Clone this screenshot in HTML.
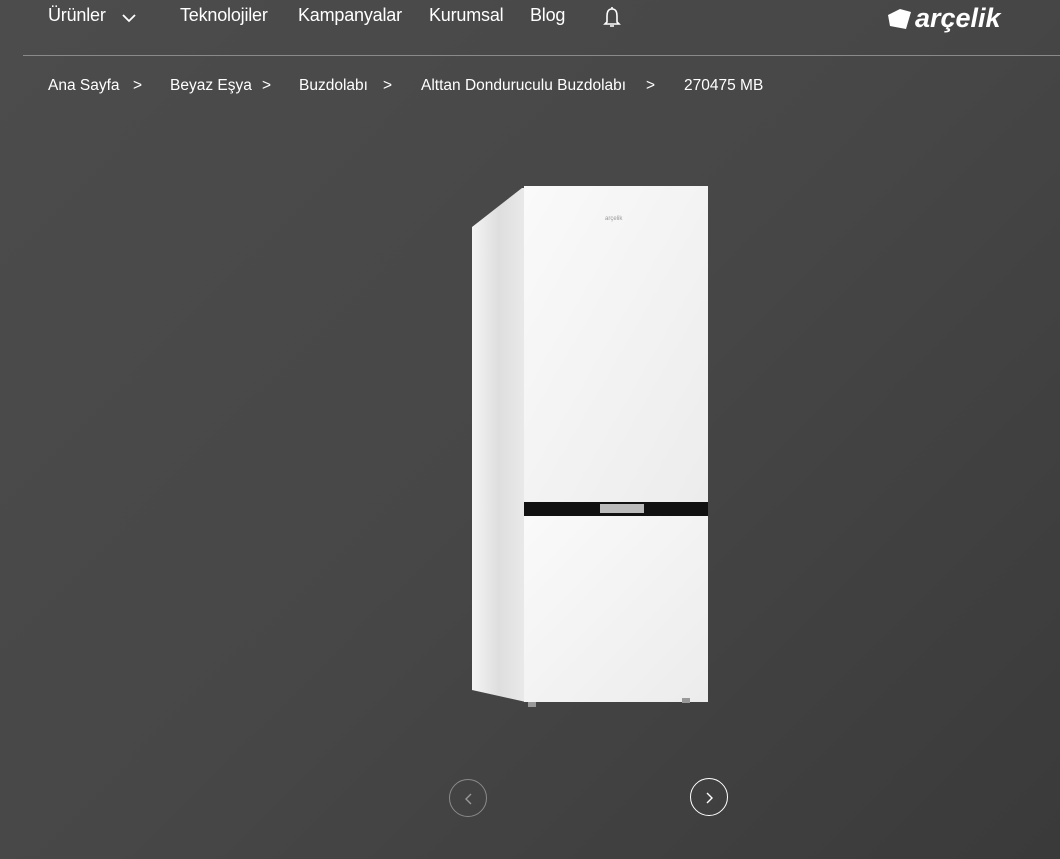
<!DOCTYPE html>
<html><head><meta charset="utf-8"><style>
html,body{margin:0;padding:0}
body{width:1060px;height:859px;overflow:hidden;position:relative;font-family:"Liberation Sans",sans-serif;color:#fff;
background:linear-gradient(135deg,#4c4c4c 0%,#474747 50%,#3a3a3a 100%);}
.nav{position:absolute;top:5px;font-size:18px;letter-spacing:-0.2px}
.bc{position:absolute;top:77px;font-size:15.5px}
.line{position:absolute;left:23px;right:0;top:55px;height:1px;background:#8a8a8a}
.circ{position:absolute;width:38px;height:38px;border-radius:50%;box-sizing:border-box}
</style></head><body>
<div class="nav" style="left:48px">Ürünler</div>
<svg style="position:absolute;left:122px;top:13px" width="14" height="10"><path d="M1 2 L7 8 L13 2" fill="none" stroke="#fff" stroke-width="1.8"/></svg>
<div class="nav" style="left:180px">Teknolojiler</div>
<div class="nav" style="left:298px">Kampanyalar</div>
<div class="nav" style="left:429px">Kurumsal</div>
<div class="nav" style="left:530px">Blog</div>
<svg style="position:absolute;left:601px;top:6px" width="22" height="24"><path d="M11 3 C6.5 3 6 7 6 11 L6 16 L4 18 L18 18 L16 16 L16 11 C16 7 15.5 3 11 3 Z M9 20 L13 20" fill="none" stroke="#fff" stroke-width="1.6"/><path d="M11 1 L11 3" stroke="#fff" stroke-width="1.6"/></svg>
<svg style="position:absolute;left:886px;top:3px" width="130" height="32"><path d="M2 12 L14 6 L25 9 L20 26 L4 23 Z" fill="#fff"/><text x="29" y="24" font-family="Liberation Sans" font-style="italic" font-weight="bold" font-size="27" fill="#fff">arçelik</text></svg>
<div class="line"></div>
<div class="bc" style="left:48px">Ana Sayfa</div><div class="bc" style="left:133px">&gt;</div>
<div class="bc" style="left:170px">Beyaz Eşya</div><div class="bc" style="left:262px">&gt;</div>
<div class="bc" style="left:299px">Buzdolabı</div><div class="bc" style="left:383px">&gt;</div>
<div class="bc" style="left:421px">Alttan Donduruculu Buzdolabı</div><div class="bc" style="left:646px">&gt;</div>
<div class="bc" style="left:684px">270475 MB</div>
<svg style="position:absolute;left:460px;top:180px" width="260" height="540">
<defs><linearGradient id="s" x1="0" x2="1"><stop offset="0" stop-color="#f4f4f4"/><stop offset="0.5" stop-color="#dedede"/><stop offset="1" stop-color="#eaeaea"/></linearGradient>
<linearGradient id="f" x1="0" y1="0" x2="1" y2="1"><stop offset="0" stop-color="#fafafa"/><stop offset="1" stop-color="#ececec"/></linearGradient></defs>
<path d="M12 47 L62 8 L66 8 L66 522 L12 510 Z" fill="url(#s)"/>
<rect x="64" y="6" width="184" height="317" fill="url(#f)"/>
<rect x="64" y="322" width="184" height="14" fill="#111"/>
<rect x="140" y="324" width="44" height="9" fill="#bbb"/>
<rect x="64" y="336" width="184" height="186" fill="url(#f)"/>
<text x="145" y="40" font-size="6" fill="#999">arçelik</text>
<rect x="68" y="522" width="8" height="5" fill="#999"/><rect x="222" y="518" width="8" height="5" fill="#999"/>
</svg>
<div class="circ" style="left:449px;top:779px;border:1.5px solid #8a8a8a"></div>
<svg style="position:absolute;left:463px;top:792px" width="12" height="14"><path d="M8 2 L3 7 L8 12" fill="none" stroke="#999" stroke-width="1.4"/></svg>
<div class="circ" style="left:690px;top:778px;border:1.5px solid #fff"></div>
<svg style="position:absolute;left:704px;top:791px" width="12" height="14"><path d="M3 2 L8 7 L3 12" fill="none" stroke="#fff" stroke-width="1.4"/></svg>
</body></html>
